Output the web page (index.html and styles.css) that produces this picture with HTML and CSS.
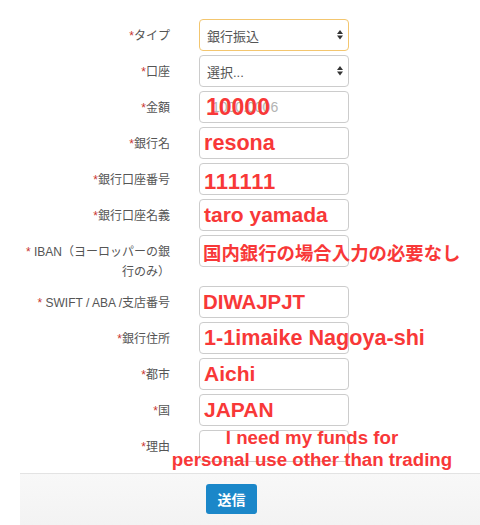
FILE: index.html
```html
<!DOCTYPE html>
<html lang="ja">
<head>
<meta charset="utf-8">
<title>出金申請</title>
<link rel="stylesheet" href="styles.css">
</head>
<body>
<div class="page">
  <form class="form">
    <div class="row">
      <label class="lbl"><span class="req">*</span>タイプ</label>
      <div class="field">
        <div class="select focus"><span>銀行振込</span>
          <svg class="arrows" width="6" height="10" viewBox="0 0 6 10"><path d="M0 4 L3 0 L6 4 Z M0 5.6 L6 5.6 L3 9.6 Z" fill="#333"/></svg>
        </div>
      </div>
    </div>
    <div class="row">
      <label class="lbl"><span class="req">*</span>口座</label>
      <div class="field">
        <div class="select"><span>選択...</span>
          <svg class="arrows" width="6" height="10" viewBox="0 0 6 10"><path d="M0 4 L3 0 L6 4 Z M0 5.6 L6 5.6 L3 9.6 Z" fill="#333"/></svg>
        </div>
      </div>
    </div>
    <div class="row">
      <label class="lbl"><span class="req">*</span>金額</label>
      <div class="field">
        <input class="inp" type="text" placeholder="1000.0006">
        <span class="note n-amount">10000</span>
      </div>
    </div>
    <div class="row">
      <label class="lbl"><span class="req">*</span>銀行名</label>
      <div class="field">
        <input class="inp" type="text">
        <span class="note n-big">resona</span>
      </div>
    </div>
    <div class="row">
      <label class="lbl"><span class="req">*</span>銀行口座番号</label>
      <div class="field">
        <input class="inp" type="text">
        <span class="note n-acct">111111</span>
      </div>
    </div>
    <div class="row">
      <label class="lbl"><span class="req">*</span>銀行口座名義</label>
      <div class="field">
        <input class="inp" type="text">
        <span class="note">taro yamada</span>
      </div>
    </div>
    <div class="row">
      <label class="lbl"><span class="req">*</span> IBAN（ヨーロッパーの銀<br>行のみ）</label>
      <div class="field">
        <input class="inp" type="text">
        <span class="note n-jp">国内銀行の場合入力の必要なし</span>
      </div>
    </div>
    <div class="row">
      <label class="lbl"><span class="req">*</span> SWIFT / ABA /支店番号</label>
      <div class="field">
        <input class="inp" type="text">
        <span class="note n-swift">DIWAJPJT</span>
      </div>
    </div>
    <div class="row">
      <label class="lbl"><span class="req">*</span>銀行住所</label>
      <div class="field">
        <input class="inp" type="text">
        <span class="note n-big">1-1imaike Nagoya-shi</span>
      </div>
    </div>
    <div class="row">
      <label class="lbl"><span class="req">*</span>都市</label>
      <div class="field">
        <input class="inp" type="text">
        <span class="note">Aichi</span>
      </div>
    </div>
    <div class="row">
      <label class="lbl"><span class="req">*</span>国</label>
      <div class="field">
        <input class="inp" type="text">
        <span class="note">JAPAN</span>
      </div>
    </div>
    <div class="row">
      <label class="lbl"><span class="req">*</span>理由</label>
      <div class="field">
        <textarea class="inp area"></textarea>
        <span class="note n-reason">I need my funds for<br>personal use other than trading</span>
      </div>
    </div>
  </form>
  <div class="footer">
    <button class="btn" type="button">送信</button>
  </div>
</div>
</body>
</html>
```

FILE: styles.css
```css
html, body {
  margin: 0;
  padding: 0;
  background: #ffffff;
}
body {
  font-family: "Liberation Sans", "Noto Sans CJK JP", sans-serif;
  color: #555555;
  width: 480px;
  height: 525px;
  overflow: hidden;
}
.page {
  padding-top: 19px;
}
.form {
  padding-left: 20px;
  margin: 0;
}
.row {
  display: grid;
  grid-template-columns: 150px 150px;
  column-gap: 29px;
  margin-bottom: 4px;
}
.lbl {
  display: block;
  text-align: right;
  font-size: 12px;
  line-height: 20px;
  padding-top: 7px;
  color: #555555;
  white-space: nowrap;
}
.req {
  color: #c9352f;
}
.field {
  position: relative;
  height: 32px;
}
.select {
  box-sizing: border-box;
  height: 32px;
  border: 1px solid #cccccc;
  border-radius: 4px;
  background: #ffffff;
  display: flex;
  align-items: center;
  justify-content: space-between;
  padding: 0 5px 0 7px;
  font-size: 13px;
  color: #555555;
}
.select.focus {
  border-color: #f3c66f;
}
.arrows {
  display: block;
}
.inp {
  display: block;
  box-sizing: border-box;
  width: 150px;
  height: 32px;
  margin: 0;
  border: 1px solid #cccccc;
  border-radius: 4px;
  background: #ffffff;
  padding: 0 12px;
  font-family: "Liberation Sans", "Noto Sans CJK JP", sans-serif;
  font-size: 14px;
  color: #555555;
  outline: none;
}
.inp::placeholder {
  color: #b3b3b3;
}
.area {
  resize: none;
  padding: 6px 12px;
}
.note {
  position: absolute;
  left: 5px;
  top: 0;
  line-height: 32px;
  font-size: 21px;
  font-weight: bold;
  color: #f83838;
  white-space: nowrap;
  pointer-events: none;
  font-family: "Liberation Sans", "Noto Sans CJK JP", sans-serif;
}
.n-amount {
  font-size: 23px;
  left: 7px;
}
.n-big {
  font-size: 21.6px;
}
.n-acct {
  font-size: 22px;
  letter-spacing: 0.8px;
  top: 3px;
}
.n-jp {
  font-size: 18.4px;
  top: 3px;
  left: 4px;
}
.n-swift {
  font-size: 20.4px;
  left: 4px;
}
.n-reason {
  left: 113px;
  top: -3px;
  transform: translateX(-50%);
  text-align: center;
  font-size: 18.7px;
  line-height: 22px;
}
.footer {
  margin-top: 11px;
  margin-left: 20px;
  border-top: 1px solid #e3e3e3;
  background: linear-gradient(#f8f8f8, #f1f1f1);
  padding: 10px 0 30px 186px;
}
.btn {
  display: block;
  width: 51px;
  height: 30px;
  border: none;
  border-radius: 3px;
  background: #1b87c9;
  color: #ffffff;
  font-family: "Liberation Sans", "Noto Sans CJK JP", sans-serif;
  font-size: 14px;
  font-weight: bold;
  padding: 0;
}
```
